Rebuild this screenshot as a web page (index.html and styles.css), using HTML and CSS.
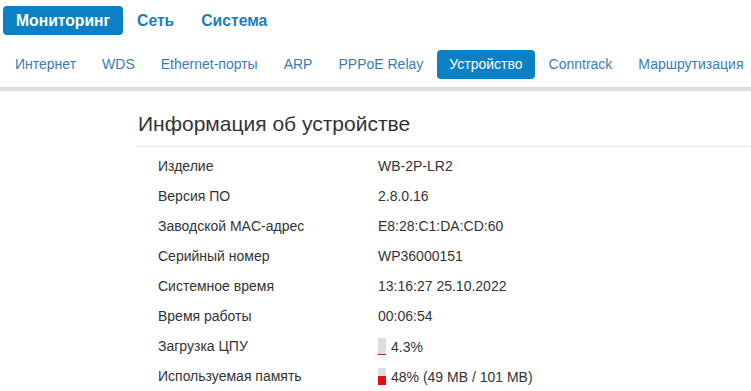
FILE: index.html
```html
<!DOCTYPE html>
<html lang="ru">
<head>
  <meta charset="UTF-8" />
  <title>Устройство | Мониторинг</title>
  <link rel="stylesheet" href="styles.css">
</head>
<body>
  <div class="topnav">
    <a class="tab active">Мониторинг</a>
    <a class="tab">Сеть</a>
    <a class="tab">Система</a>
  </div>

  <div class="subnav">
    <a class="subtab">Интернет</a>
    <a class="subtab">WDS</a>
    <a class="subtab">Ethernet-порты</a>
    <a class="subtab">ARP</a>
    <a class="subtab">PPPoE Relay</a>
    <a class="subtab active">Устройство</a>
    <a class="subtab">Conntrack</a>
    <a class="subtab">Маршрутизация</a>
  </div>

  <div class="content">
    <h2>Информация об устройстве</h2>
    <table class="info">
      <tr><td class="label">Изделие</td><td>WB-2P-LR2</td></tr>
      <tr><td class="label">Версия ПО</td><td>2.8.0.16</td></tr>
      <tr><td class="label">Заводской MAC-адрес</td><td>E8:28:C1:DA:CD:60</td></tr>
      <tr><td class="label">Серийный номер</td><td>WP36000151</td></tr>
      <tr><td class="label">Системное время</td><td>13:16:27 25.10.2022</td></tr>
      <tr><td class="label">Время работы</td><td>00:06:54</td></tr>
      <tr>
        <td class="label">Загрузка ЦПУ</td>
        <td><span class="meter"><span class="fill" style="height: 4.3%"></span></span>4.3%</td>
      </tr>
      <tr>
        <td class="label">Используемая память</td>
        <td><span class="meter"><span class="fill" style="height: 48%"></span></span>48% (49 MB / 101 MB)</td>
      </tr>
    </table>
  </div>
</body>
</html>
```

FILE: styles.css
```css
body {
  margin: 0;
  font-family: 'Liberation Sans', Arial, sans-serif;
  font-size: 14px;
  color: #333;
  background: #fff;
  overflow: hidden;
}

.topnav {
  display: flex;
  gap: 1px;
  padding: 6px 0 0 3px;
}

.tab {
  display: block;
  padding: 0 13px;
  height: 29px;
  line-height: 29px;
  font-size: 15.7px;
  font-weight: bold;
  color: #1a7dc1;
  border-radius: 4px;
  cursor: pointer;
}

.tab.active {
  background: #0b80c5;
  color: #fff;
}

.subnav {
  display: flex;
  gap: 2px;
  padding: 15px 0 8px 3px;
  border-bottom: 4px solid #ddd;
  white-space: nowrap;
}

.subtab {
  display: block;
  padding: 0 12px;
  height: 29px;
  line-height: 29px;
  color: #3c7cb3;
  border-radius: 4px;
  cursor: pointer;
}

.subtab.active {
  background: #0b80c5;
  color: #fff;
}

.content {
  padding-left: 138px;
}

h2 {
  margin: 21px 0 0;
  padding-bottom: 10px;
  font-size: 21px;
  font-weight: normal;
  color: #333;
  border-bottom: 1px solid #e5e5e5;
}

.info {
  border-collapse: collapse;
  margin-top: 4px;
}

.info td {
  height: 30px;
  padding: 0;
  vertical-align: middle;
}

.info td.label {
  width: 220px;
  padding-left: 20px;
}

.meter {
  display: inline-flex;
  flex-direction: column;
  justify-content: flex-end;
  width: 8px;
  height: 17px;
  margin-right: 5px;
  vertical-align: -3px;
  background: #ddd;
}

.fill {
  display: block;
  min-height: 1px;
  background: #e01010;
}
```
